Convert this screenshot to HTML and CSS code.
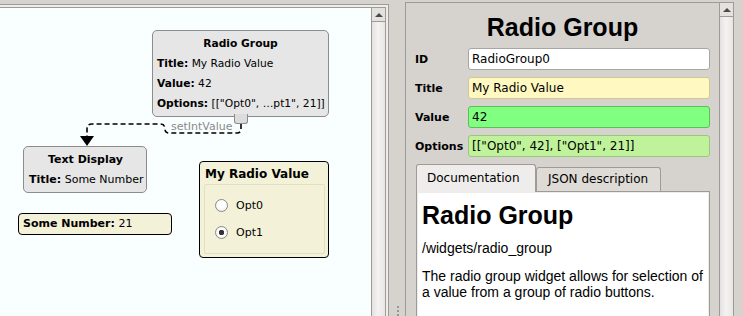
FILE: index.html
```html
<!DOCTYPE html>
<html>
<head>
    <meta charset="UTF-8">
    <title>Radio Group</title>
    <link rel="stylesheet" href="styles.css">
</head>
<body>
<div class="app">
    <!-- flow canvas -->
    <div class="left">
        <div class="frame">
            <div class="frame-inner">
                <div class="canvas">
                    <svg class="wires" width="371" height="308" viewBox="0 8 371 308">
                        <path d="M241 124 L241 129 Q241 133 237 133 L169 133 Q165 133 165 129 Q165 124 160 124 L92 124 Q87 124 87 129 L87 137"
                              fill="none" stroke="#000" stroke-width="1.6" stroke-dasharray="5 3"/>
                        <polygon points="80,136 94,136 87,146" fill="#000"/>
                    </svg>
                    <div class="wire-label">setIntValue</div>

                    <div class="node node-radio">
                        <div class="node-title">Radio Group</div>
                        <div class="node-row"><b>Title:</b> My Radio Value</div>
                        <div class="node-row"><b>Value:</b> 42</div>
                        <div class="node-row"><b>Options:</b> [["Opt0", …pt1", 21]]</div>
                    </div>
                    <div class="port"></div>

                    <div class="node node-text">
                        <div class="node-title">Text Display</div>
                        <div class="node-row"><b>Title:</b> Some Number</div>
                    </div>

                    <div class="widget widget-number"><b>Some Number:</b> 21</div>

                    <div class="widget widget-radio">
                        <div class="widget-title">My Radio Value</div>
                        <div class="radio-box">
                            <div class="radio-row"><span class="radio"></span>Opt0</div>
                            <div class="radio-row"><span class="radio checked"></span>Opt1</div>
                        </div>
                    </div>
                </div>
                <div class="vscroll">
                    <div class="arrow-btn"><span class="tri"></span></div>
                </div>
            </div>
        </div>
    </div>

    <div class="handle"><span class="grip"></span></div>

    <!-- property editor -->
    <div class="right">
        <div class="props">
            <h2 class="props-title">Radio Group</h2>
            <div class="field">
                <span class="field-label">ID</span>
                <div class="field-input">RadioGroup0</div>
            </div>
            <div class="field">
                <span class="field-label">Title</span>
                <div class="field-input input-yellow">My Radio Value</div>
            </div>
            <div class="field">
                <span class="field-label">Value</span>
                <div class="field-input input-green">42</div>
            </div>
            <div class="field">
                <span class="field-label">Options</span>
                <div class="field-input input-lime">[["Opt0", 42], ["Opt1", 21]]</div>
            </div>

            <div class="tabs">
                <div class="tab active">Documentation</div>
                <div class="tab">JSON description</div>
            </div>
            <div class="tab-panel">
                <div class="doc">
                    <h1 class="doc-title">Radio Group</h1>
                    <p class="doc-path">/widgets/radio_group</p>
                    <p class="doc-text">The radio group widget allows for selection of a value from a group of radio buttons.</p>
                </div>
            </div>
        </div>
        <div class="vscroll">
            <div class="arrow-btn"><span class="tri"></span></div>
        </div>
    </div>
</div>
</body>
</html>
```

FILE: styles.css
```css
* {
    margin: 0;
    padding: 0;
    box-sizing: border-box;
}

html, body {
    width: 743px;
    height: 316px;
    overflow: hidden;
}

body {
    background: #d6d2ce;
    font-family: "DejaVu Sans", sans-serif;
    font-size: 12px;
    color: #000;
}

.app {
    display: flex;
    height: 316px;
}

/* ---- left: canvas ---- */
.left {
    width: 390px;
    flex: none;
}

.frame {
    margin: 4px 1px 0 -4px;
    height: 312px;
    padding: 2px 2px 0 2px;
    border: 1px solid #9e9a96;
    border-bottom: 0;
    background: #eeedec;
}

.frame-inner {
    display: flex;
    height: 100%;
    border: 1px solid #9e9a96;
    border-bottom: 0;
}

.canvas {
    position: relative;
    width: 371px;
    background: #f9fefe;
    overflow: hidden;
}

.wires {
    position: absolute;
    left: 0;
    top: 0;
}

.wire-label {
    position: absolute;
    left: 171px;
    top: 112px;
    font-size: 11px;
    line-height: 14px;
    color: #8a8a8a;
}

.node {
    position: absolute;
    padding: 3px 4px 2px 4px;
    background: #e6e6e6;
    border: 1px solid #8c8c8c;
    border-radius: 5px;
    font-size: 11px;
}

.node-title {
    font-weight: bold;
    text-align: center;
    line-height: 20px;
}

.node-row {
    line-height: 20px;
    white-space: nowrap;
}

.node-radio {
    left: 152px;
    top: 22px;
    width: 177px;
    font-size: 10.7px;
}

.node-text {
    left: 23px;
    top: 138px;
    width: 124px;
    padding-left: 5px;
}

.port {
    position: absolute;
    left: 234px;
    top: 106px;
    width: 14px;
    height: 10px;
    background: #dcdcdc;
    border: 1px solid #8c8c8c;
    border-top: 0;
    border-radius: 0 0 3px 3px;
}

.widget {
    position: absolute;
    background: #f3f1d8;
    border: 1px solid #000;
    border-radius: 4px;
    font-size: 11px;
}

.widget-number {
    left: 18px;
    top: 205px;
    width: 154px;
    height: 22px;
    padding-left: 4px;
    line-height: 20px;
}

.widget-radio {
    left: 199px;
    top: 153px;
    width: 130px;
    height: 97px;
    padding-top: 2px;
}

.widget-title {
    padding-left: 5px;
    font-size: 12px;
    font-weight: bold;
    line-height: 20px;
}

.radio-box {
    margin: 0 3px 0 4px;
    height: 70px;
    padding: 7px 0 0 10px;
    border: 1px solid #e2e0c4;
    border-radius: 2px;
}

.radio-row {
    display: flex;
    align-items: center;
    height: 27px;
    font-size: 11px;
}

.radio {
    width: 13px;
    height: 13px;
    margin-right: 8px;
    border: 1px solid #8a8a8a;
    border-radius: 50%;
    background: radial-gradient(circle at 50% 35%, #fff 40%, #e6e6e6 100%);
}

.radio.checked {
    background: radial-gradient(circle, #333 2.5px, #fff 3px, #fff 45%, #e6e6e6 100%);
}

/* ---- scrollbars ---- */
.vscroll {
    width: 14px;
    flex: none;
    border-left: 1px solid #9e9a96;
    background: linear-gradient(to right, #e4e2e0, #f4f3f2 45%, #e8e6e4);
}

.arrow-btn {
    display: flex;
    align-items: center;
    justify-content: center;
    height: 14px;
    border-bottom: 1px solid #9e9a96;
    background: #e4e2df;
}

.tri {
    width: 0;
    height: 0;
    border-left: 4px solid transparent;
    border-right: 4px solid transparent;
    border-bottom: 4px solid #4a4a4a;
}

/* ---- pane handle ---- */
.handle {
    width: 15px;
    flex: none;
    display: flex;
    justify-content: center;
    padding-top: 306px;
}

.grip {
    width: 2px;
    height: 10px;
    background: repeating-linear-gradient(to bottom, #9a9692 0, #9a9692 2px, transparent 2px, transparent 4px);
}

/* ---- right: properties ---- */
.right {
    display: flex;
    flex: none;
    width: 329px;
    height: 314px;
    margin-top: 2px;
    border: 1px solid #9e9a96;
    border-bottom: 0;
}

.props {
    width: 313px;
    padding: 8px 9px 0 9px;
    overflow: hidden;
}

.props-title {
    font-family: "Liberation Sans", Arial, sans-serif;
    font-size: 25px;
    line-height: 32px;
    text-align: center;
    margin-bottom: 5px;
}

.field {
    display: flex;
    align-items: center;
    height: 22px;
    margin-bottom: 7px;
}

.field-label {
    width: 53px;
    flex: none;
    font-size: 11px;
    font-weight: bold;
}

.field-input {
    flex: 1;
    height: 22px;
    padding: 0 3px;
    line-height: 20px;
    font-size: 12px;
    background: #fff;
    border: 1px solid #a8a6a4;
    border-radius: 3px;
    white-space: nowrap;
}

.input-yellow {
    background: #fff8c0;
    border-color: #cfc79a;
}

.input-green {
    background: #80ff80;
    border-color: #5cbf5c;
}

.input-lime {
    background: #bff29a;
    border-color: #98c87c;
}

.tabs {
    display: flex;
    align-items: flex-end;
    margin: 6px 0 0 1px;
}

.tab {
    width: 125px;
    height: 24px;
    padding-left: 11px;
    line-height: 23px;
    background: #dedad6;
    border: 1px solid #9e9a96;
    border-bottom: 0;
    border-radius: 3px 3px 0 0;
}

.tab.active {
    position: relative;
    z-index: 1;
    width: 120px;
    height: 28px;
    margin-bottom: -1px;
    padding-left: 10px;
    line-height: 26px;
    background: #eeedec;
}

.tab-panel {
    width: 294px;
    height: 130px;
    margin-left: 1px;
    padding: 1px;
    border: 1px solid #9e9a96;
    background: #eeedec;
}

.doc {
    height: 100%;
    padding: 7px 0 0 4px;
    background: #fff;
    font-family: "Liberation Sans", Arial, sans-serif;
}

.doc-title {
    font-size: 25px;
    line-height: 30px;
}

.doc-path {
    margin-top: 10px;
    font-size: 14px;
    line-height: 16px;
}

.doc-text {
    margin-top: 12px;
    font-size: 14px;
    line-height: 16px;
}
```
